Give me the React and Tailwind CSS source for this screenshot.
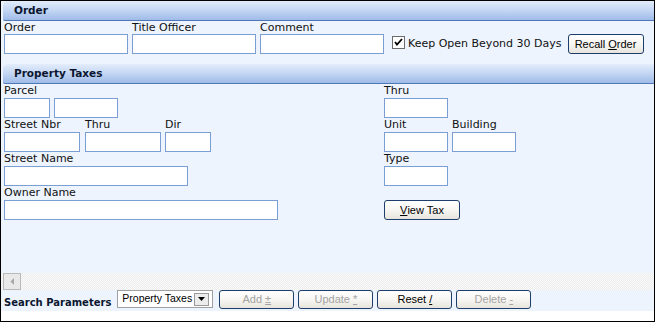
import React from "react";

const Header = ({ children, className = "" }) => (
  <div
    className={`ml-[2px] h-[20px] rounded-tl-[5px] rounded-bl-[2px] border-b border-[#4f76b6] bg-gradient-to-b from-[#e3edfb] via-[#c3d6f3] to-[#9fbbe8] pl-[11px] flex items-center font-bold text-[10.5px] text-[#0b1630] ${className}`}
  >
    {children}
  </div>
);

const Label = ({ children, w }) => (
  <div className="h-[14px] leading-[14px] text-[11px] text-[#111] whitespace-nowrap" style={{ width: w }}>
    {children}
  </div>
);

const Input = ({ w, h = 20 }) => (
  <div className="border border-[#7b9fd4] bg-white box-border" style={{ width: w, height: h }} />
);

const Field = ({ label, w, className = "" }) => (
  <div className={`flex flex-col ${className}`}>
    <Label w={w}>{label}</Label>
    <Input w={w} />
  </div>
);

const Btn = ({ children, disabled, w = 75, h = 19, className = "" }) => (
  <div
    className={`box-border flex items-center justify-center rounded-[3px] border border-[#1d3e6c] bg-gradient-to-b from-white via-[#f7f6f2] to-[#e6e4dc] font-['Liberation_Sans'] text-[11px] whitespace-nowrap ${
      disabled ? "text-[#a3a3a3]" : "text-black"
    } ${className}`}
    style={{ width: w, height: h }}
  >
    {children}
  </div>
);

export default function App() {
  return (
    <div className="w-[655px] h-[322px] box-border border border-black bg-[#edf4fe] flex flex-col font-['DejaVu_Sans',sans-serif] overflow-hidden">
      <Header>Order</Header>
      <div className="flex items-end pl-[3px]">
        <div className="flex gap-[4px]">
          <div className="flex flex-col">
            <div className="h-[13px] leading-[13px] text-[11px] text-[#111]">Order</div>
            <Input w={124} />
          </div>
          <div className="flex flex-col">
            <div className="h-[13px] leading-[13px] text-[11px] text-[#111]">Title Officer</div>
            <Input w={124} />
          </div>
          <div className="flex flex-col">
            <div className="h-[13px] leading-[13px] text-[11px] text-[#111]">Comment</div>
            <Input w={124} />
          </div>
        </div>
        <div className="ml-[8px] h-[20px] flex items-center">
          <div className="w-[13px] h-[13px] box-border border border-[#6b6b6b] bg-white flex items-center justify-center -mt-[3px]">
            <svg width="9" height="9" viewBox="0 0 9 9">
              <path d="M1 4 L3 6.5 L8 1" stroke="#000" strokeWidth="1.8" fill="none" />
            </svg>
          </div>
          <span className="ml-[3px] text-[11px] text-[#111] whitespace-nowrap">Keep Open Beyond 30 Days</span>
        </div>
        <Btn w={76} h={20} className="ml-[6px]">
          Recall <span className="underline ml-[3px]">O</span>rder
        </Btn>
      </div>

      <Header className="mt-[10px]">Property Taxes</Header>
      <div className="flex pl-[3px]">
        <div className="w-[380px] flex flex-col">
          <div className="flex flex-col">
            <Label w={46}>Parcel</Label>
            <div className="flex gap-[4px]">
              <Input w={46} />
              <Input w={64} />
            </div>
          </div>
          <div className="flex">
            <Field label="Street Nbr" w={76} />
            <Field label="Thru" w={76} className="ml-[5px]" />
            <Field label="Dir" w={46} className="ml-[4px]" />
          </div>
          <Field label="Street Name" w={184} />
          <Field label="Owner Name" w={274} />
        </div>
        <div className="flex flex-col">
          <Field label="Thru" w={64} />
          <div className="flex gap-[4px]">
            <Field label="Unit" w={64} />
            <Field label="Building" w={64} />
          </div>
          <Field label="Type" w={64} />
          <div className="h-[14px]" />
          <Btn w={76} h={20}>
            <span className="underline">V</span>iew Tax
          </Btn>
        </div>
      </div>

      <div className="flex-1" />

      <div className="h-[17px] flex bg-[#f3f3f3] bg-[repeating-conic-gradient(#ececec_0%_25%,#fbfbfb_0%_50%)] bg-[length:2px_2px]">
        <div className="ml-[2px] w-[18px] h-[17px] box-border border border-[#b9b9b9] bg-[#e9e9e9] flex items-center justify-center">
          <svg width="5" height="7" viewBox="0 0 5 7">
            <path d="M4 0 L0.5 3.5 L4 7 Z" fill="#a8a8a8" />
          </svg>
        </div>
      </div>

      <div className="h-[21px] flex items-start pl-[3px]">
        <div className="h-[19px] mt-[3px] flex items-center font-bold text-[10px] text-[#0b1630] whitespace-nowrap">
          Search Parameters
        </div>
        <div className="ml-[6px] w-[96px] h-[18px] box-border border border-[#a0a0a0] bg-white flex items-center pl-[4px] pr-[3px] font-['Liberation_Sans'] text-[10.5px] text-black whitespace-nowrap overflow-hidden">
          <span className="flex-1">Property Taxes</span>
          <div className="w-[15px] h-[13px] box-border border border-[#9a9a9a] bg-[#ececec] flex items-center justify-center">
            <svg width="7" height="4" viewBox="0 0 7 4">
              <path d="M0 0 L7 0 L3.5 4 Z" fill="#000" />
            </svg>
          </div>
        </div>
        <div className="ml-[6px] flex gap-[4px]">
          <Btn disabled>
            Add <span className="underline ml-[3px]">±</span>
          </Btn>
          <Btn disabled>
            Update <span className="underline ml-[3px]">*</span>
          </Btn>
          <Btn>
            Reset <span className="underline ml-[3px]">/</span>
          </Btn>
          <Btn disabled>
            Delete <span className="underline ml-[3px]">-</span>
          </Btn>
        </div>
      </div>
      <div className="h-[10px] bg-white" />
    </div>
  );
}
